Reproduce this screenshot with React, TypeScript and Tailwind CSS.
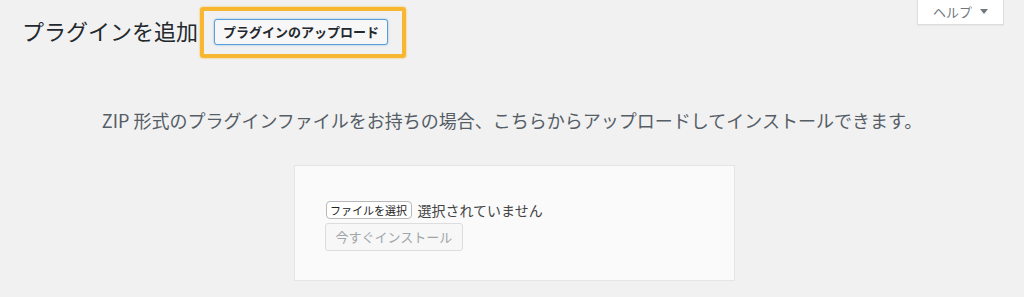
import React from "react";

const font = { fontFamily: '"Noto Sans CJK JP", "Noto Sans", sans-serif' };

export default function App() {
  return (
    <div className="w-[1024px] h-[297px] overflow-hidden bg-[#f1f1f1] text-[#23282d]" style={font}>
      <div className="flex items-start justify-between pr-[20px]">
        <div className="flex items-center pt-[7px] pl-[22px]">
          <h1 className="mb-[6px] text-[22px] leading-[30px] font-normal">プラグインを追加</h1>
          <div className="ml-[2px] rounded-[3px] border-[4px] border-[#f7b731] pl-[10px] pr-[14px] pt-[7px] pb-[9px] shadow-[0_0_2px_#f7b731]">
            <button className="h-[26px] rounded-[3px] border border-[#5b9dd9] bg-[#f7f7f7] px-[8px] text-[13px] font-bold leading-[24px] text-[#23282d] shadow-[0_0_2px_rgba(30,140,190,0.5)]">
              プラグインのアップロード
            </button>
          </div>
        </div>
        <div className="flex h-[25px] w-[87px] items-center justify-center gap-[8px] border border-t-0 border-[#dddddd] bg-white text-[13px] text-[#72777c] shadow-[0_1px_1px_rgba(0,0,0,0.04)]">
          <span>ヘルプ</span>
          <svg width="8" height="6" viewBox="0 0 8 6">
            <path d="M0 0 L8 0 L4 5 Z" fill="#72777c" />
          </svg>
        </div>
      </div>

      <p className="mt-[50px] text-center text-[18px] leading-[24px] text-[#555d66]">
        ZIP 形式のプラグインファイルをお持ちの場合、こちらからアップロードしてインストールできます。
      </p>

      <div className="mt-[33px] flex justify-center pl-[4px]">
        <div className="w-[441px] border border-[#e5e5e5] bg-[#fafafa] px-[30px] pt-[33px] pb-[29px]">
          <div className="flex h-[22px] items-center">
            <button className="ml-[1px] h-[18px] w-[86px] rounded-[4px] border border-[#b8b8b8] bg-white text-[11px] leading-[16px] text-[#222]">
              ファイルを選択
            </button>
            <span className="ml-[6px] text-[14px] text-[#444]">選択されていません</span>
          </div>
          <button
            disabled
            className="mt-[2px] h-[28px] rounded-[3px] border border-[#dddddd] bg-[#f7f7f7] px-[10px] text-[13px] leading-[26px] text-[#a0a5aa]"
          >
            今すぐインストール
          </button>
        </div>
      </div>
    </div>
  );
}
